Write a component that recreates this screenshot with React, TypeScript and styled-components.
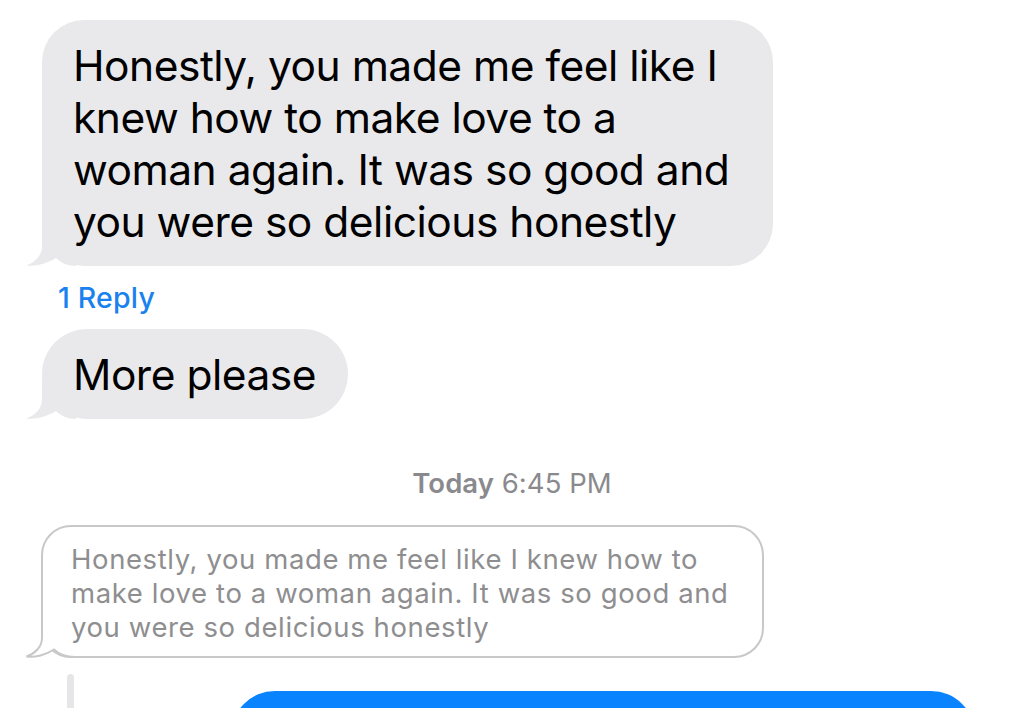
import React from 'react'
import styled, { createGlobalStyle } from 'styled-components'

const GlobalStyle = createGlobalStyle`
  html, body {
    margin: 0;
    padding: 0;
    background: #ffffff;
  }
  body {
    font-family: Inter, "Noto Sans", "Liberation Sans", sans-serif;
    -webkit-font-smoothing: antialiased;
  }
`

const Screen = styled.div`
  width: 1024px;
  height: 708px;
  overflow: hidden;
  background: #ffffff;
  padding-top: 20px;
  box-sizing: border-box;
  display: flex;
  flex-direction: column;
  align-items: flex-start;

  & > * {
    flex-shrink: 0;
  }
`

const Bubble = styled.div<{ $radius: number; $padRight: number }>`
  position: relative;
  margin-left: 42px;
  background: #e9e9eb;
  color: #000000;
  border-radius: ${(p) => p.$radius}px;
  padding: 20px ${(p) => p.$padRight}px 18px 31px;
  font-size: 42.5px;
  line-height: 52px;
  letter-spacing: -0.5px;
  box-sizing: border-box;
`

const QuoteBubble = styled.div`
  position: relative;
  margin-left: 41px;
  margin-top: 26px;
  width: 723px;
  box-sizing: border-box;
  border: 2px solid #c8c8c9;
  border-radius: 30px;
  padding: 15px 20px 12px 28px;
  color: #8e8e90;
  font-size: 27.5px;
  line-height: 34px;
  letter-spacing: 0.6px;
`

const Line = styled.span`
  position: relative;
  display: block;
  white-space: nowrap;
`

const ReplyLink = styled.div`
  margin: 16px 0 0 58px;
  color: #1a82ee;
  font-size: 28.5px;
  line-height: 32px;
  font-weight: 500;
  letter-spacing: 0.2px;
`

const Spacer = styled.div<{ $h: number }>`
  height: ${(p) => p.$h}px;
`

const Stamp = styled.div`
  align-self: center;
  margin-top: 48px;
  color: #8a8a8e;
  font-size: 27.5px;
  line-height: 32px;
  letter-spacing: 0.05px;

  b {
    font-weight: 600;
  }
`

const ThreadRow = styled.div`
  display: flex;
  align-items: flex-start;
  margin-top: 16px;
  width: 100%;
`

const ThreadLine = styled.div`
  margin-left: 67px;
  width: 7px;
  height: 80px;
  border-radius: 4px 4px 0 0;
  background: #e6e6e8;
`

const BlueBubble = styled.div`
  margin-left: 157px;
  margin-top: 17px;
  width: 744px;
  height: 80px;
  border-radius: 44px 44px 0 0;
  background: #0a84fe;
`

const TailSvg = styled.svg<{ $outlined?: boolean }>`
  position: absolute;
  left: ${(p) => (p.$outlined ? -18 : -16)}px;
  bottom: ${(p) => (p.$outlined ? -2 : 0)}px;
  width: 50px;
  height: 40px;
  overflow: visible;
`

const Tail = ({ fill, stroke }: { fill: string; stroke?: string }) => {
  if (stroke) {
    return (
      <TailSvg viewBox="0 0 50 40" $outlined>
        <path d="M17,0 L17,20 C17,29 10,35.5 1.5,38.5 C10,39.8 21,36.8 29,31.5 C34,36.5 41,39 50,39 L50,0 Z" fill={fill} />
        <path d="M17,0 L17,20 C17,29 10,35.5 1.5,38.5 C10,39.8 21,36.8 29,31.5 C34,36.5 41,39 50,39" fill="none" stroke={stroke} strokeWidth={2} />
      </TailSvg>
    )
  }
  return (
    <TailSvg viewBox="0 0 50 40">
      <path d="M16,0 L16,20 C16,30 9,36 0.5,39.5 C10,40.5 21,37.5 30,32 C35,37 42,40 50,40 L50,0 Z" fill={fill} />
    </TailSvg>
  )
}

const App = () => {
  return (
    <Screen>
      <GlobalStyle />
      <Bubble $radius={42} $padRight={44}>
        <Tail fill="#e9e9eb" />
        <Line>Honestly, you made me feel like I</Line>
        <Line>knew how to make love to a</Line>
        <Line>woman again. It was so good and</Line>
        <Line>you were so delicious honestly</Line>
      </Bubble>
      <ReplyLink>1 Reply</ReplyLink>
      <Spacer $h={15} />
      <Bubble $radius={45} $padRight={32}>
        <Tail fill="#e9e9eb" />
        <Line>More please</Line>
      </Bubble>
      <Stamp>
        <b>Today</b> 6:45 PM
      </Stamp>
      <QuoteBubble>
        <Tail fill="#ffffff" stroke="#c8c8c9" />
        <Line>Honestly, you made me feel like I knew how to</Line>
        <Line>make love to a woman again. It was so good and</Line>
        <Line>you were so delicious honestly</Line>
      </QuoteBubble>
      <ThreadRow>
        <ThreadLine />
        <BlueBubble />
      </ThreadRow>
    </Screen>
  )
}

export default App
